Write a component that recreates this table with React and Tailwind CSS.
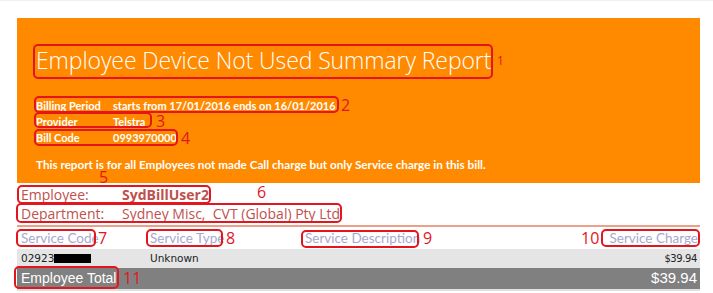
import React from 'react';

const RED = 'border-[#e3151d]';

// red annotation outline drawn over the report
const Mark = ({ x, y, w, h }) => (
    <div
        className={`absolute border-2 ${RED} rounded-[5px]`}
        style={{ left: x, top: y, width: w, height: h }}
    />
);

const Num = ({ x, y, t, small }) => (
    <div
        className={`absolute text-[#e3151d] leading-[14px] font-['Open_Sans',sans-serif] ${small ? 'text-[12px]' : 'text-[16px]'}`}
        style={{ left: x, top: y }}
    >
        {t}
    </div>
);

const marks = [
    { x: 33, y: 44, w: 460, h: 35 },
    { x: 34, y: 96, w: 305, h: 17 },
    { x: 34, y: 112, w: 118, h: 16 },
    { x: 34, y: 129, w: 144, h: 17 },
    { x: 17, y: 185, w: 194, h: 19 },
    { x: 16, y: 203, w: 326, h: 20 },
    { x: 16, y: 229, w: 80, h: 18 },
    { x: 146, y: 229, w: 77, h: 18 },
    { x: 301, y: 230, w: 118, h: 18 },
    { x: 601, y: 229, w: 99, h: 18 },
    { x: 14, y: 266, w: 105, h: 23 },
];

const nums = [
    { x: 497, y: 54, t: '1', small: true },
    { x: 341, y: 98, t: '2' },
    { x: 156, y: 114, t: '3' },
    { x: 181, y: 131, t: '4' },
    { x: 99, y: 170, t: '5' },
    { x: 257, y: 185, t: '6' },
    { x: 98, y: 231, t: '7' },
    { x: 226, y: 231, t: '8' },
    { x: 423, y: 231, t: '9' },
    { x: 581, y: 231, t: '10' },
    { x: 123, y: 271, t: '11' },
];

const cols = 'grid grid-cols-[129px_155px_1fr_auto] items-center';

const App = () => {
    return (
        <div className="relative w-[713px] h-[293px] bg-white overflow-hidden">
            <div className="h-[1px] bg-[#efefef]" />

            <div className="ml-[17px] mr-[13px] mt-[17px]">
                {/* Orange report header */}
                <div className="h-[165px] bg-[#ff8a00] text-white pl-[19px] pt-[27px]">
                    <h1 className="text-[23px] leading-[30px] font-light font-['Open_Sans',sans-serif] tracking-[-0.1px]">
                        Employee Device Not Used Summary Report
                    </h1>
                    <div className="mt-[23px] text-[11px] leading-[16px] font-bold font-['Lato',sans-serif]">
                        <div className="flex"><span className="w-[77px] shrink-0">Billing Period</span><span>starts from 17/01/2016 ends on 16/01/2016</span></div>
                        <div className="flex"><span className="w-[77px] shrink-0">Provider</span><span>Telstra</span></div>
                        <div className="flex"><span className="w-[77px] shrink-0">Bill Code</span><span>0993970000</span></div>
                    </div>
                    <p className="mt-[12px] text-[11.7px] leading-[12px] font-bold font-['Lato',sans-serif]">
                        This report is for all Employees not made Call charge but only Service charge in this bill.
                    </p>
                </div>

                {/* Employee info */}
                <div className="pt-[2px] text-[14px] leading-[19px] text-[#c0504d] font-['Open_Sans',sans-serif] pl-[4px]">
                    <div className="flex"><span className="w-[101px] shrink-0">Employee:</span><span className="font-bold">SydBillUser2</span></div>
                    <div className="flex"><span className="w-[101px] shrink-0">Department:</span><span>Sydney Misc,&nbsp; CVT (Global) Pty Ltd</span></div>
                </div>

                <div className="mt-[2px] h-[2px] bg-[#eba08a]" />

                {/* Table */}
                <div className={`${cols} h-[22px] text-[13.5px] text-[#a8a8cf] font-['Lato',sans-serif] pl-[4px] pr-[2px]`}>
                    <span>Service Code</span>
                    <span>Service Type</span>
                    <span>Service Description</span>
                    <span>Service Charge</span>
                </div>
                <div className={`${cols} h-[19px] bg-[#e5e5e5] text-[10.5px] text-[#222] font-['DejaVu_Sans',sans-serif] pl-[4px] pr-[3px]`}>
                    <span className="flex items-center">02923<span className="inline-block w-[37px] h-[9px] bg-black" /></span>
                    <span>Unknown</span>
                    <span />
                    <span className="text-[10px] tracking-[-0.4px]">$39.94</span>
                </div>
                <div className="h-[21px] flex items-center bg-[#808080] text-white text-[14px] font-['Liberation_Sans',sans-serif] pl-[4px] pr-[3px]">
                    <span className="flex-1">Employee Total</span>
                    <span className="text-[15px]">$39.94</span>
                </div>
                <div className="h-[2px] bg-[#e0e0e0]" />
            </div>

            {marks.map((m, i) => <Mark key={i} {...m} />)}
            {nums.map((n, i) => <Num key={i} {...n} />)}
        </div>
    );
};

export default App;
